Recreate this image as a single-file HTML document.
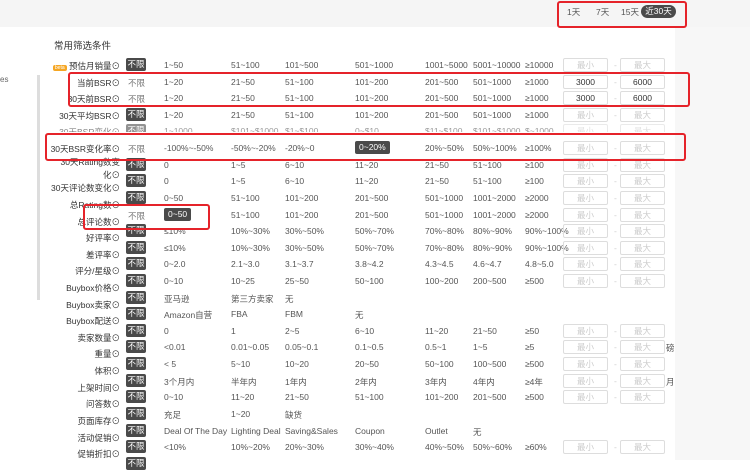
<!DOCTYPE html><html><head><meta charset="utf-8"><style>
*{margin:0;padding:0;box-sizing:border-box}
body{width:750px;height:460px;overflow:hidden;background:#fff;font-family:"Liberation Sans","Noto Sans CJK SC",sans-serif;font-size:8.5px;color:#555;position:relative}
.top{position:absolute;left:0;top:0;width:750px;height:27px;background:#f5f5f5}
.side{position:absolute;left:675px;top:27px;width:75px;height:433px;background:#f7f7f7}
.sb{position:absolute;left:37px;top:75px;width:3px;height:225px;background:#ddd}
.r{position:absolute;left:0;width:675px;height:14px}
.r *{position:absolute;top:2px;white-space:nowrap;font-style:normal;font-weight:normal}
.l{right:555px;color:#333;text-align:right}
.u{left:126px;top:0!important;width:20px;height:13px;background:#4a4a4a;color:#fff;border-radius:2px;text-align:center;line-height:13px}
.n{left:128px;color:#777}
.in{top:0!important;width:45px;height:14px;border:1px solid #ddd;border-radius:2px;color:#ccc;text-align:center;line-height:12px}
.a{left:563px}.b{left:620px}.d{left:614px;color:#ccc}
.c1{left:164px}.c2{left:231px}.c3{left:285px}.c4{left:355px}.c5{left:425px}.c6{left:473px}.c7{left:525px}
.sel{background:#4a4a4a;color:#fff;padding:0 4px;border-radius:2px;top:0!important;height:13px;line-height:13px}
.box{position:absolute;border:2.5px solid #e5232a;border-radius:3px}
.v{color:#333}
</style></head><body>
<div class="top"></div><div class="side"></div><div class="sb"></div>
<div style="position:absolute;left:0;top:75px;font-size:8px;color:#666">es</div>
<div style="position:absolute;left:54px;top:38px;font-size:9.5px;color:#333">常用筛选条件</div>
<div style="position:absolute;left:567px;top:6px;font-size:8.5px;color:#555">1天</div>
<div style="position:absolute;left:596px;top:6px;font-size:8.5px;color:#555">7天</div>
<div style="position:absolute;left:621px;top:6px;font-size:8.5px;color:#555">15天</div>
<div style="position:absolute;left:641px;top:5px;width:35px;height:13px;background:#4a4a4a;color:#fff;border-radius:7px;text-align:center;line-height:13px;font-size:8.5px">近30天</div>

<div class="r" style="top:58px"><span class="l"><span style="position:static;background:#f5a623;color:#fff;font-size:5px;padding:0 2px;border-radius:2px">beta</span> 预估月销量⊙</span><b class="u">不限</b><i class="c1">1~50</i><i class="c2">51~100</i><i class="c3">101~500</i><i class="c4">501~1000</i><i class="c5">1001~5000</i><i class="c6">5001~10000</i><i class="c7">≥10000</i><i class="in a">最小</i><i class="d">-</i><i class="in b">最大</i></div>
<div class="r" style="top:75px"><span class="l">当前BSR⊙</span><i class="n">不限</i><i class="c1">1~20</i><i class="c2">21~50</i><i class="c3">51~100</i><i class="c4">101~200</i><i class="c5">201~500</i><i class="c6">501~1000</i><i class="c7">≥1000</i><i class="in a v">3000</i><i class="d">-</i><i class="in b v">6000</i></div>
<div class="r" style="top:91px"><span class="l">30天前BSR⊙</span><i class="n">不限</i><i class="c1">1~20</i><i class="c2">21~50</i><i class="c3">51~100</i><i class="c4">101~200</i><i class="c5">201~500</i><i class="c6">501~1000</i><i class="c7">≥1000</i><i class="in a v">3000</i><i class="d">-</i><i class="in b v">6000</i></div>
<div class="r" style="top:108px"><span class="l">30天平均BSR⊙</span><b class="u">不限</b><i class="c1">1~20</i><i class="c2">21~50</i><i class="c3">51~100</i><i class="c4">101~200</i><i class="c5">201~500</i><i class="c6">501~1000</i><i class="c7">≥1000</i><i class="in a">最小</i><i class="d">-</i><i class="in b">最大</i></div>
<div class="r" style="top:124px;opacity:.6;clip-path:inset(0 0 6px 0)"><span class="l">30天BSR变化⊙</span><b class="u">不限</b><i class="c1">1~1000</i><i class="c2">$101~$1000</i><i class="c3">$1~$100</i><i class="c4">0~$10</i><i class="c5">$11~$100</i><i class="c6">$101~$1000</i><i class="c7">$~1000</i><i class="in a">最小</i><i class="in b">最大</i></div>
<div class="r" style="top:141px"><span class="l">30天BSR变化率⊙</span><i class="n">不限</i><i class="c1">-100%~-50%</i><i class="c2">-50%~-20%</i><i class="c3">-20%~0</i><i class="c4 sel">0~20%</i><i class="c5">20%~50%</i><i class="c6">50%~100%</i><i class="c7">≥100%</i><i class="in a">最小</i><i class="d">-</i><i class="in b">最大</i></div>
<div class="r" style="top:158px"><span class="l" style="top:-2px">30天Rating数变</span><span class="l" style="top:11px">化⊙</span><b class="u">不限</b><i class="c1">0</i><i class="c2">1~5</i><i class="c3">6~10</i><i class="c4">11~20</i><i class="c5">21~50</i><i class="c6">51~100</i><i class="c7">≥100</i><i class="in a">最小</i><i class="d">-</i><i class="in b">最大</i></div>
<div class="r" style="top:174px"><span class="l" style="top:8px">30天评论数变化⊙</span><b class="u">不限</b><i class="c1">0</i><i class="c2">1~5</i><i class="c3">6~10</i><i class="c4">11~20</i><i class="c5">21~50</i><i class="c6">51~100</i><i class="c7">≥100</i><i class="in a">最小</i><i class="d">-</i><i class="in b">最大</i></div>
<div class="r" style="top:191px"><span class="l" style="top:8px">总Rating数⊙</span><b class="u">不限</b><i class="c1">0~50</i><i class="c2">51~100</i><i class="c3">101~200</i><i class="c4">201~500</i><i class="c5">501~1000</i><i class="c6">1001~2000</i><i class="c7">≥2000</i><i class="in a">最小</i><i class="d">-</i><i class="in b">最大</i></div>
<div class="r" style="top:208px"><span class="l" style="top:8px">总评论数⊙</span><i class="n">不限</i><i class="c1 sel">0~50</i><i class="c2">51~100</i><i class="c3">101~200</i><i class="c4">201~500</i><i class="c5">501~1000</i><i class="c6">1001~2000</i><i class="c7">≥2000</i><i class="in a">最小</i><i class="d">-</i><i class="in b">最大</i></div>
<div class="r" style="top:224px"><span class="l" style="top:8px">好评率⊙</span><b class="u">不限</b><i class="c1">≤10%</i><i class="c2">10%~30%</i><i class="c3">30%~50%</i><i class="c4">50%~70%</i><i class="c5">70%~80%</i><i class="c6">80%~90%</i><i class="c7">90%~100%</i><i class="in a">最小</i><i class="d">-</i><i class="in b">最大</i></div>
<div class="r" style="top:241px"><span class="l" style="top:8px">差评率⊙</span><b class="u">不限</b><i class="c1">≤10%</i><i class="c2">10%~30%</i><i class="c3">30%~50%</i><i class="c4">50%~70%</i><i class="c5">70%~80%</i><i class="c6">80%~90%</i><i class="c7">90%~100%</i><i class="in a">最小</i><i class="d">-</i><i class="in b">最大</i></div>
<div class="r" style="top:257px"><span class="l" style="top:8px">评分/星级⊙</span><b class="u">不限</b><i class="c1">0~2.0</i><i class="c2">2.1~3.0</i><i class="c3">3.1~3.7</i><i class="c4">3.8~4.2</i><i class="c5">4.3~4.5</i><i class="c6">4.6~4.7</i><i class="c7">4.8~5.0</i><i class="in a">最小</i><i class="d">-</i><i class="in b">最大</i></div>
<div class="r" style="top:274px"><span class="l" style="top:8px">Buybox价格⊙</span><b class="u">不限</b><i class="c1">0~10</i><i class="c2">10~25</i><i class="c3">25~50</i><i class="c4">50~100</i><i class="c5">100~200</i><i class="c6">200~500</i><i class="c7">≥500</i><i class="in a">最小</i><i class="d">-</i><i class="in b">最大</i></div>
<div class="r" style="top:291px"><span class="l" style="top:8px">Buybox卖家⊙</span><b class="u">不限</b><i class="c1">亚马逊</i><i class="c2">第三方卖家</i><i class="c3">无</i></div>
<div class="r" style="top:307px"><span class="l" style="top:8px">Buybox配送⊙</span><b class="u">不限</b><i class="c1">Amazon自营</i><i class="c2">FBA</i><i class="c3">FBM</i><i class="c4">无</i></div>
<div class="r" style="top:324px"><span class="l" style="top:8px">卖家数量⊙</span><b class="u">不限</b><i class="c1">0</i><i class="c2">1</i><i class="c3">2~5</i><i class="c4">6~10</i><i class="c5">11~20</i><i class="c6">21~50</i><i class="c7">≥50</i><i class="in a">最小</i><i class="d">-</i><i class="in b">最大</i></div>
<div class="r" style="top:340px"><span class="l" style="top:8px">重量⊙</span><b class="u">不限</b><i class="c1">&lt;0.01</i><i class="c2">0.01~0.05</i><i class="c3">0.05~0.1</i><i class="c4">0.1~0.5</i><i class="c5">0.5~1</i><i class="c6">1~5</i><i class="c7">≥5</i><i class="in a">最小</i><i class="d">-</i><i class="in b">最大</i><i style="left:666px">磅</i></div>
<div class="r" style="top:357px"><span class="l" style="top:8px">体积⊙</span><b class="u">不限</b><i class="c1">&lt; 5</i><i class="c2">5~10</i><i class="c3">10~20</i><i class="c4">20~50</i><i class="c5">50~100</i><i class="c6">100~500</i><i class="c7">≥500</i><i class="in a">最小</i><i class="d">-</i><i class="in b">最大</i></div>
<div class="r" style="top:374px"><span class="l" style="top:8px">上架时间⊙</span><b class="u">不限</b><i class="c1">3个月内</i><i class="c2">半年内</i><i class="c3">1年内</i><i class="c4">2年内</i><i class="c5">3年内</i><i class="c6">4年内</i><i class="c7">≥4年</i><i class="in a">最小</i><i class="d">-</i><i class="in b">最大</i><i style="left:666px">月</i></div>
<div class="r" style="top:390px"><span class="l" style="top:8px">问答数⊙</span><b class="u">不限</b><i class="c1">0~10</i><i class="c2">11~20</i><i class="c3">21~50</i><i class="c4">51~100</i><i class="c5">101~200</i><i class="c6">201~500</i><i class="c7">≥500</i><i class="in a">最小</i><i class="d">-</i><i class="in b">最大</i></div>
<div class="r" style="top:407px"><span class="l" style="top:8px">页面库存⊙</span><b class="u">不限</b><i class="c1">充足</i><i class="c2">1~20</i><i class="c3">缺货</i></div>
<div class="r" style="top:424px"><span class="l" style="top:8px">活动促销⊙</span><b class="u">不限</b><i class="c1">Deal Of The Day</i><i class="c2">Lighting Deal</i><i class="c3">Saving&amp;Sales</i><i class="c4">Coupon</i><i class="c5">Outlet</i><i class="c6">无</i></div>
<div class="r" style="top:440px"><span class="l" style="top:8px">促销折扣⊙</span><b class="u">不限</b><i class="c1">&lt;10%</i><i class="c2">10%~20%</i><i class="c3">20%~30%</i><i class="c4">30%~40%</i><i class="c5">40%~50%</i><i class="c6">50%~60%</i><i class="c7">≥60%</i><i class="in a">最小</i><i class="d">-</i><i class="in b">最大</i></div>
<div class="r" style="top:457px"><b class="u">不限</b></div>

<div class="box" style="left:557px;top:1px;width:130px;height:27px"></div>
<div class="box" style="left:68px;top:72px;width:622px;height:35px"></div>
<div class="box" style="left:45px;top:133px;width:641px;height:28px"></div>
<div class="box" style="left:83px;top:204px;width:127px;height:26px"></div>
</body></html>
